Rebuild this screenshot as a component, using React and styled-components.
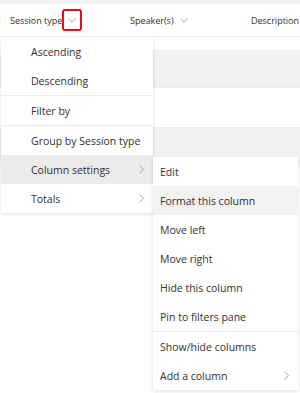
import React from "react";
import styled, { createGlobalStyle } from "styled-components";

const Global = createGlobalStyle`
  html, body { margin: 0; padding: 0; background: #fff; }
  body { font-family: "Open Sans", "Noto Sans", Arial, sans-serif; }
`;

const Page = styled.div`
  position: relative;
  width: 300px;
  height: 393px;
  overflow: hidden;
  background: #fff;
`;

const TopStrip = styled.div`
  height: 4px;
  background: #f3f3f3;
`;

const HeaderRow = styled.div`
  display: flex;
  align-items: center;
  height: 32px;
  border-bottom: 1px solid #efefef;
  font-size: 9px;
  color: #323130;
  white-space: nowrap;
`;

const HeaderCell = styled.div`
  display: flex;
  align-items: center;
  gap: 6px;
  flex: 0 0 ${(p) => p.$w}px;
  padding-left: ${(p) => p.$pl}px;
  box-sizing: border-box;
  overflow: hidden;
`;

const Row = styled.div`
  height: ${(p) => p.$h}px;
  background: ${(p) => (p.$gray ? "#f1f1f1" : "#fff")};
  border-bottom: ${(p) => (p.$line ? "1px solid #ebebeb" : "none")};
  box-sizing: border-box;
`;

const Highlight = styled.div`
  position: absolute;
  left: 62px;
  top: 9px;
  width: 20px;
  height: 22px;
  box-sizing: border-box;
  border: 2px solid #e8101a;
  border-radius: 3px;
`;

const Menu = styled.div`
  position: absolute;
  left: ${(p) => p.$x}px;
  top: ${(p) => p.$y}px;
  width: ${(p) => p.$w}px;
  background: #fff;
  box-shadow: 0 1.6px 3.6px rgba(0, 0, 0, 0.13), 0 0.3px 0.9px rgba(0, 0, 0, 0.11);
  display: flex;
  flex-direction: column;
  font-size: 10.5px;
  color: #323130;
`;

const Item = styled.div`
  display: flex;
  align-items: center;
  justify-content: space-between;
  height: 29px;
  padding-left: ${(p) => p.$pl}px;
  padding-right: 9px;
  background: ${(p) => p.$bg || "transparent"};
  white-space: nowrap;
`;

const Divider = styled.div`
  height: 1px;
  background: #edebe9;
`;

const Down = () => (
  <svg width="8" height="5" viewBox="0 0 8 5" fill="none">
    <path d="M0.4 0.6 L4 4.2 L7.6 0.6" stroke="#8a8886" strokeWidth="0.8" />
  </svg>
);

const Right = () => (
  <svg width="5" height="9" viewBox="0 0 5 9" fill="none">
    <path d="M0.6 0.5 L4.4 4.5 L0.6 8.5" stroke="#a19f9d" strokeWidth="0.9" />
  </svg>
);

const mainItems = [
  { t: "Ascending" },
  { t: "Descending", div: true },
  { t: "Filter by", div: true },
  { t: "Group by Session type" },
  { t: "Column settings", sub: true, bg: "#edebe9" },
  { t: "Totals", sub: true },
];

const subItems = [
  { t: "Edit" },
  { t: "Format this column", bg: "#f3f2f1" },
  { t: "Move left" },
  { t: "Move right" },
  { t: "Hide this column" },
  { t: "Pin to filters pane", div: true },
  { t: "Show/hide columns" },
  { t: "Add a column", sub: true },
];

const renderItems = (items, pl) =>
  items.map((it) => (
    <React.Fragment key={it.t}>
      <Item $pl={pl} $bg={it.bg}>
        <span>{it.t}</span>
        {it.sub && <Right />}
      </Item>
      {it.div && <Divider />}
    </React.Fragment>
  ));

export default function App() {
  return (
    <>
      <Global />
      <Page>
        <TopStrip />
        <HeaderRow>
          <HeaderCell $w={120} $pl={10}>
            Session type <Down />
          </HeaderCell>
          <HeaderCell $w={121} $pl={10}>
            Speaker(s) <Down />
          </HeaderCell>
          <HeaderCell $w={59} $pl={10}>
            Description
          </HeaderCell>
        </HeaderRow>
        <Row $h={13} />
        <Row $h={38} $gray $line />
        <Row $h={40} $line />
        <Row $h={38} $gray />
        <Highlight />
        <Menu $x={1} $y={37} $w={152}>
          {renderItems(mainItems, 30)}
        </Menu>
        <Menu $x={153} $y={157} $w={145}>
          {renderItems(subItems, 7)}
        </Menu>
      </Page>
    </>
  );
}
